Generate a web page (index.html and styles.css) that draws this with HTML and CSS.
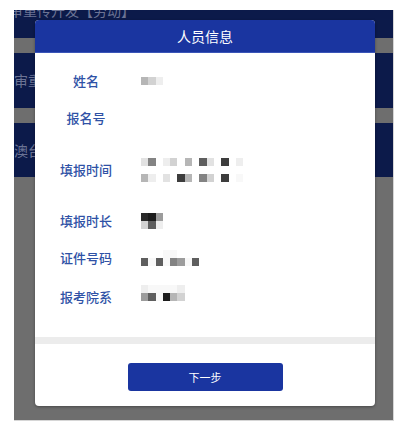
FILE: index.html
```html
<!DOCTYPE html>
<html lang="zh-CN">
<head>
<meta charset="utf-8">
<title>人员信息</title>
<link rel="stylesheet" href="styles.css">
</head>
<body>
<div class="screen">
  <div class="list">
    <div class="item item-first"><span class="item-text item-text-cut">审重传开发【劳动】</span></div>
    <div class="item item-tall"><span class="item-text">审重点项目申报</span></div>
    <div class="item item-tall"><span class="item-text">澳台地区报名</span></div>
  </div>

  <div class="modal">
    <div class="modal-header">人员信息</div>
    <div class="modal-body">
      <div class="row row-name">
        <div class="label">姓名</div>
        <div class="mosaic">
          <div class="mrow"><span class="px k7"></span><span class="px k8"></span><span class="px k10"></span></div>
        </div>
      </div>
      <div class="row row-no">
        <div class="label">报名号</div>
        <div class="mosaic"></div>
      </div>
      <div class="row row-time">
        <div class="label">填报时间</div>
        <div class="mosaic">
          <div class="mrow"><span class="px k9"></span><span class="px k5"></span><span class="px"></span><span class="px k10"></span><span class="px k8"></span><span class="px"></span><span class="px k7"></span><span class="px"></span><span class="px k4"></span><span class="px k9"></span><span class="px"></span><span class="px k3"></span><span class="px"></span><span class="px k10"></span></div>
          <div class="mrow"></div>
          <div class="mrow"><span class="px k7"></span><span class="px k10"></span><span class="px"></span><span class="px k9"></span><span class="px"></span><span class="px k3"></span><span class="px k7"></span><span class="px"></span><span class="px k5"></span><span class="px k8"></span><span class="px"></span><span class="px k3"></span><span class="px"></span><span class="px k11"></span></div>
        </div>
      </div>
      <div class="row row-dur">
        <div class="label">填报时长</div>
        <div class="mosaic">
          <div class="mrow"><span class="px k2"></span><span class="px k1"></span><span class="px k6"></span></div>
          <div class="mrow"><span class="px k8"></span><span class="px k4"></span><span class="px k10"></span></div>
        </div>
      </div>
      <div class="row row-id">
        <div class="label">证件号码</div>
        <div class="mosaic">
          <div class="mrow"><span class="px"></span><span class="px"></span><span class="px"></span><span class="px k11"></span><span class="px k11"></span></div>
          <div class="mrow"><span class="px k4"></span><span class="px k11"></span><span class="px k4"></span><span class="px k11"></span><span class="px k5"></span><span class="px k6"></span><span class="px k11"></span><span class="px k4"></span></div>
        </div>
      </div>
      <div class="row row-dept">
        <div class="label">报考院系</div>
        <div class="mosaic">
          <div class="mrow"><span class="px k10"></span><span class="px k11"></span><span class="px k11"></span><span class="px k11"></span><span class="px k11"></span><span class="px k10"></span></div>
          <div class="mrow"><span class="px k6"></span><span class="px k4"></span><span class="px k11"></span><span class="px k1"></span><span class="px k7"></span><span class="px k8"></span></div>
          <div class="mrow"></div>
        </div>
      </div>
    </div>
    <div class="modal-sep"></div>
    <div class="modal-footer">
      <button class="btn-next" type="button">下一步</button>
    </div>
  </div>
</div>
</body>
</html>
```

FILE: styles.css
```css
html, body {
  margin: 0;
  padding: 0;
  background: #ffffff;
  font-family: "Noto Sans CJK SC", "Noto Sans", sans-serif;
}

.screen {
  position: relative;
  margin: 10px 0 0 14px;
  width: 379px;
  height: 410px;
  background: #6e6e6e;
  overflow: hidden;
  border-right: 1px solid #d6d6d6;
  border-bottom: 1px solid #d6d6d6;
}

.list {
  display: flex;
  flex-direction: column;
  gap: 15px;
}

.item {
  background: #0c1a4a;
  display: flex;
  align-items: center;
  overflow: hidden;
  white-space: nowrap;
}

.item-first {
  height: 28px;
  align-items: flex-start;
}

.item-tall {
  height: 54.5px;
}

.item-text {
  color: #6b7394;
  font-size: 14px;
  line-height: 16px;
}

.item-text-cut {
  margin-top: -8px;
  margin-left: -5px;
}

.modal {
  position: absolute;
  left: 21px;
  top: 10px;
  width: 340px;
  height: 386px;
  background: #ffffff;
  border-radius: 4px;
  box-shadow: 0 1px 3px rgba(0, 0, 0, 0.35);
  display: flex;
  flex-direction: column;
  overflow: hidden;
}

.modal-header {
  height: 33px;
  background: #1a35a0;
  color: #ffffff;
  font-size: 14px;
  display: flex;
  align-items: center;
  justify-content: center;
  border-bottom: 1px solid #3a55b8;
  box-sizing: border-box;
}

.modal-body {
  padding: 9px 0 21px 19px;
  display: flex;
  flex-direction: column;
}

.row {
  display: flex;
  align-items: center;
  gap: 23px;
}

.row-name { height: 38px; }
.row-no { height: 36px; }
.row-time { height: 68px; }
.row-dur { height: 34px; }
.row-id { height: 40px; }
.row-dept { height: 38px; }

.label {
  width: 64px;
  text-align: center;
  font-size: 13px;
  font-weight: 500;
  line-height: 18px;
  color: #2f52a6;
}

.mosaic {
  display: flex;
  flex-direction: column;
}

.mrow {
  display: flex;
  height: 8px;
}

.px {
  width: 7.3px;
  height: 8px;
  flex: none;
}

.k1 { background: #1c1c1c; }
.k2 { background: #2a2a2a; }
.k3 { background: #3d3d3d; }
.k4 { background: #5e5e5e; }
.k5 { background: #838383; }
.k6 { background: #9c9c9c; }
.k7 { background: #b6b6b6; }
.k8 { background: #d2d2d2; }
.k9 { background: #e2e2e2; }
.k10 { background: #eeeeee; }
.k11 { background: #f8f8f8; }

.modal-sep {
  height: 7px;
  background: #ececec;
}

.modal-footer {
  flex: 1;
  display: flex;
  justify-content: center;
  padding-top: 19px;
}

.btn-next {
  width: 155px;
  height: 28px;
  border: none;
  border-radius: 3px;
  background: #1a35a0;
  color: #ffffff;
  font-family: "Noto Sans CJK SC", "Noto Sans", sans-serif;
  font-size: 11px;
  padding: 0;
}
```
